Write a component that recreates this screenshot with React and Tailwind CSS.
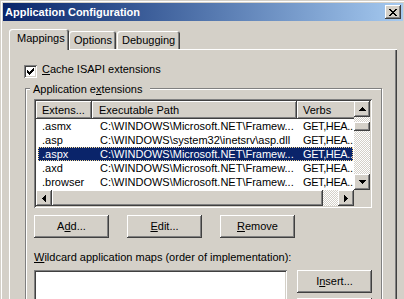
import React from "react";

const raised =
  "bg-[#d4d0c8] shadow-[inset_-1px_-1px_#404040,inset_1px_1px_#fff,inset_-2px_-2px_#808080,inset_2px_2px_#d4d0c8]";
const sunken =
  "shadow-[inset_1px_1px_#808080,inset_-1px_-1px_#fff,inset_2px_2px_#404040,inset_-2px_-2px_#d4d0c8] p-[2px]";
const checker =
  "bg-[repeating-conic-gradient(#fff_0_25%,#d4d0c8_0_50%)] bg-[length:2px_2px]";

function Px({ rects, w, h }) {
  return (
    <svg width={w} height={h} viewBox={`0 0 ${w} ${h}`} shapeRendering="crispEdges">
      {rects.map(([x, y, rw, rh], i) => (
        <rect key={i} x={x} y={y} width={rw} height={rh} fill="#000" />
      ))}
    </svg>
  );
}

const upRects = [[3, 0, 1, 1], [2, 1, 3, 1], [1, 2, 5, 1], [0, 3, 7, 1]];
const downRects = [[0, 0, 7, 1], [1, 1, 5, 1], [2, 2, 3, 1], [3, 3, 1, 1]];
const leftRects = [[0, 3, 1, 1], [1, 2, 1, 3], [2, 1, 1, 5], [3, 0, 1, 7]];
const rightRects = [[0, 0, 1, 7], [1, 1, 1, 5], [2, 2, 1, 3], [3, 3, 1, 1]];

function ArrowBtn({ rects, w, h }) {
  return (
    <div className={`w-[16px] h-[16px] shrink-0 flex items-center justify-center ${raised}`}>
      <Px rects={rects} w={w} h={h} />
    </div>
  );
}

function CloseBtn() {
  const rects = [];
  for (let i = 0; i < 7; i++) {
    rects.push([i, i, 2, 1]);
    rects.push([6 - i, i, 2, 1]);
  }
  return (
    <div className={`w-[16px] h-[14px] flex items-center justify-center ${raised}`}>
      <Px rects={rects} w={8} h={7} />
    </div>
  );
}

function Check() {
  const rects = [
    [6, 0, 1, 1],
    [5, 1, 2, 1],
    [0, 2, 1, 1], [4, 2, 3, 1],
    [0, 3, 2, 1], [3, 3, 3, 1],
    [0, 4, 5, 1],
    [1, 5, 3, 1],
    [2, 6, 1, 1],
  ];
  return (
    <div className={`w-[13px] h-[13px] shrink-0 mt-[2px] bg-white ${sunken} flex items-center justify-center`}>
      <Px rects={rects} w={7} h={7} />
    </div>
  );
}

function Btn({ children, className = "" }) {
  return (
    <div className={`w-[75px] h-[23px] shrink-0 flex items-center justify-center ${raised} ${className}`}>
      <span>{children}</span>
    </div>
  );
}

const rows = [
  [".asmx", "C:\\WINDOWS\\Microsoft.NET\\Framew...", "GET,HEA..."],
  [".asp", "C:\\WINDOWS\\system32\\inetsrv\\asp.dll", "GET,HEA..."],
  [".aspx", "C:\\WINDOWS\\Microsoft.NET\\Framew...", "GET,HEA..."],
  [".axd", "C:\\WINDOWS\\Microsoft.NET\\Framew...", "GET,HEA..."],
  [".browser", "C:\\WINDOWS\\Microsoft.NET\\Framew...", "GET,HEA..."],
];

function HeaderCell({ w, pl, children }) {
  return (
    <div
      className={`${w} ${pl} h-[18px] shrink-0 flex items-center whitespace-nowrap overflow-hidden ${raised}`}
    >
      {children}
    </div>
  );
}

function ListView() {
  return (
    <div className={`w-[338px] h-[109px] bg-white ${sunken}`}>
      <div className="flex flex-col w-[334px] h-[105px]">
        <div className="flex h-[89px]">
          <div className="w-[318px] overflow-hidden bg-white">
            <div className="flex w-max">
              <HeaderCell w="w-[56px]" pl="pl-[6px]">Extens...</HeaderCell>
              <HeaderCell w="w-[205px]" pl="pl-[7px]">Executable Path</HeaderCell>
              <HeaderCell w="w-[80px]" pl="pl-[6px]">Verbs</HeaderCell>
            </div>
            {rows.map((r, i) => {
              const sel = i === 2;
              return (
                <div
                  key={i}
                  className={`flex w-max h-[14px] items-center ml-[2px] whitespace-nowrap ${
                    sel
                      ? "bg-[#0a246a] text-white outline-1 outline-dotted outline-[#f5db95] -outline-offset-1"
                      : ""
                  }`}
                >
                  <div className="w-[54px] pl-[4px] overflow-hidden">{r[0]}</div>
                  <div className="w-[205px] pl-[8px] overflow-hidden">{r[1]}</div>
                  <div className="w-[56px] pl-[6px] overflow-hidden tracking-[-0.4px]">{r[2]}</div>
                </div>
              );
            })}
          </div>
          <div className="w-[16px] flex flex-col">
            <ArrowBtn rects={upRects} w={7} h={4} />
            <div className={`h-[5px] ${checker}`} />
            <div className={`h-[9px] ${raised}`} />
            <div className={`flex-1 ${checker}`} />
            <ArrowBtn rects={downRects} w={7} h={4} />
          </div>
        </div>
        <div className="flex h-[16px]">
          <ArrowBtn rects={leftRects} w={4} h={7} />
          <div className={`w-[271px] h-[16px] ${raised}`} />
          <div className={`w-[15px] h-[16px] ${checker}`} />
          <ArrowBtn rects={rightRects} w={4} h={7} />
          <div className="w-[16px] h-[16px] bg-[#d4d0c8]" />
        </div>
      </div>
    </div>
  );
}

const tabShadow =
  "shadow-[inset_1px_1px_#fff,inset_-1px_0_#404040,inset_-2px_0_#808080] rounded-t-[3px] bg-[#d4d0c8]";

export default function App() {
  return (
    <div className="w-[404px] h-[299px] overflow-hidden bg-[#d4d0c8] font-['Liberation_Sans',Arial,sans-serif] text-[11px] leading-[13px] text-black">
      <div className="w-[406px] h-[340px] p-[3px] bg-[#d4d0c8] shadow-[inset_1px_1px_#d4d0c8,inset_2px_2px_#fff]">
        <div className="h-[18px] flex items-center justify-between px-[2px] bg-gradient-to-r from-[#0a246a] to-[#a6caf0]">
          <span className="font-bold text-white">Application Configuration</span>
          <CloseBtn />
        </div>
        <div className="px-[6px] pt-[8px]">
          <div className="flex items-end h-[20px]">
            <div className={`relative z-10 w-[60px] h-[21px] -mb-px pl-[8px] pt-[3px] ${tabShadow}`}>
              Mappings
            </div>
            <div className={`w-[47px] h-[18px] pl-[5px] pt-[3px] ${tabShadow}`}>Options</div>
            <div className={`ml-px w-[63px] h-[18px] pl-[5px] pt-[3px] ${tabShadow}`}>Debugging</div>
          </div>
          <div className="w-[388px] h-[300px] pt-[14px] pl-[15px] bg-[#d4d0c8] shadow-[inset_1px_1px_#fff,inset_-1px_-1px_#404040,inset_-2px_-2px_#808080]">
            <div className="flex items-start gap-[5px]">
              <Check />
              <span>
                <span className="underline">C</span>ache ISAPI extensions
              </span>
            </div>
            <div className="relative ml-px mt-[10px] w-[357px] h-[260px] border border-[#808080] shadow-[inset_1px_1px_#fff,1px_1px_#fff]">
              <span className="absolute left-[4px] -top-[6px] pl-[3px] pr-[8px] bg-[#d4d0c8] whitespace-nowrap">
                Application e<span className="underline">x</span>tensions
              </span>
              <div className="pt-[10px] pl-[8px]">
                <ListView />
                <div className="flex gap-[18px] mt-[7px]">
                  <Btn>
                    A<span className="underline">d</span>d...
                  </Btn>
                  <Btn>
                    <span className="underline">E</span>dit...
                  </Btn>
                  <Btn>
                    <span className="underline">R</span>emove
                  </Btn>
                </div>
                <div className="mt-[13px] whitespace-nowrap">
                  <span className="underline">W</span>ildcard application maps (order of implementation):
                </div>
                <div className="flex mt-[6px]">
                  <div className={`w-[253px] h-[60px] bg-white ${sunken}`} />
                  <div className="ml-[10px] flex flex-col gap-[5px]">
                    <Btn>
                      I<span className="underline">n</span>sert...
                    </Btn>
                    <Btn>Remove</Btn>
                  </div>
                </div>
              </div>
            </div>
          </div>
        </div>
      </div>
    </div>
  );
}
